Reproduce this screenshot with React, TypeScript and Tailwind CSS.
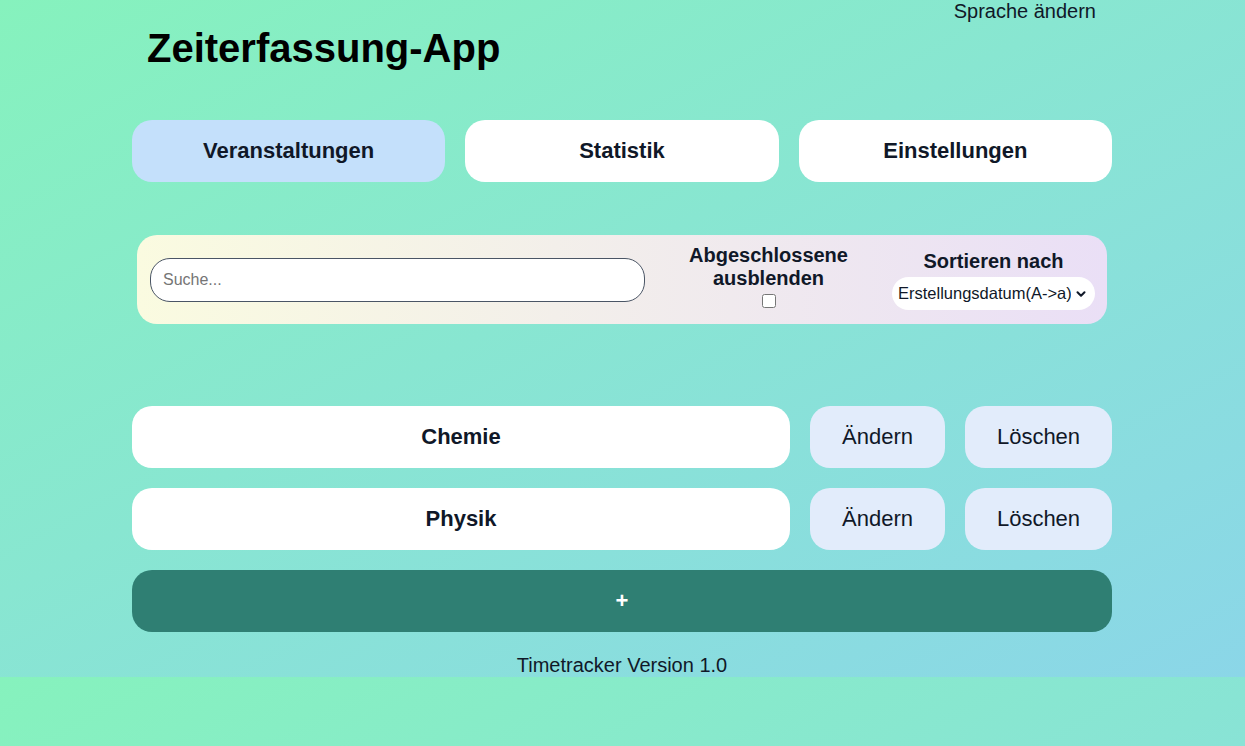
import { useState } from 'react';
import { ChevronDown } from 'lucide-react';

const events = ['Chemie', 'Physik'];

const tabs = ['Veranstaltungen', 'Statistik', 'Einstellungen'];

export default function App() {
  const [active, setActive] = useState('Veranstaltungen');
  const [hideDone, setHideDone] = useState(false);

  return (
    <div className="min-h-screen bg-linear-to-br from-[#86f2bd] to-[#8bd6e8] bg-size-[100%_677px] bg-repeat font-['Liberation_Sans',Arial,sans-serif] text-gray-900">
      <div className="bg-linear-to-br from-[#86f2bd] to-[#8bd6e8]">
        <div className="mx-auto flex w-[981px] flex-col pr-px">
          <div className="flex justify-end pr-4">
            <button className="text-[20px] leading-[23px] text-gray-900">Sprache ändern</button>
          </div>

          <h1 className="mt-[2px] pl-[15px] text-[40px] font-bold leading-[46px] text-black">
            Zeiterfassung-App
          </h1>

          <nav className="mt-[49px] grid grid-cols-3 gap-5">
            {tabs.map((t) => (
              <button
                key={t}
                onClick={() => setActive(t)}
                className={
                  'h-[62px] rounded-[20px] pb-px text-[22px] font-bold ' +
                  (active === t ? 'bg-[#c4e0fb]' : 'bg-white')
                }
              >
                {t}
              </button>
            ))}
          </nav>

          <section className="mx-[5px] mt-[53px] flex h-[89px] items-center justify-between rounded-[20px] bg-linear-to-r from-[#fafbe0] to-[#eadff6] pl-[13px] pr-[12px]">
            <input
              type="text"
              placeholder="Suche..."
              className="h-[44px] w-[495px] rounded-[20px] border border-gray-600 bg-white px-3 text-[16px] placeholder:text-[#757575]"
            />
            <label className="mt-[-7px] flex w-[170px] flex-col items-center text-center text-[20px] font-bold leading-[23px]">
              Abgeschlossene ausblenden
              <input
                type="checkbox"
                checked={hideDone}
                onChange={(e) => setHideDone(e.target.checked)}
                className="mt-[4px] h-[14px] w-[14px]"
              />
            </label>
            <div className="flex w-[203px] flex-col items-center">
              <span className="text-[20px] font-bold leading-[23px]">Sortieren nach</span>
              <div className="relative mt-[4px]">
                <select className="h-[33px] w-[203px] appearance-none rounded-full bg-white pl-[6px] pr-6 text-[16.5px] text-gray-900">
                  <option>Erstellungsdatum(A-&gt;a)</option>
                  <option>Erstellungsdatum(a-&gt;A)</option>
                  <option>Name(A-&gt;Z)</option>
                </select>
                <ChevronDown
                  size={14}
                  strokeWidth={3.5}
                  className="pointer-events-none absolute right-[7px] top-[10px] text-gray-900"
                />
              </div>
            </div>
          </section>

          <ul className="mt-[82px] flex flex-col gap-5">
            {events.map((name) => (
              <li key={name} className="flex h-[62px] gap-5">
                <button className="w-[658px] rounded-[20px] bg-white pb-px text-[22px] font-bold">{name}</button>
                <button className="w-[135px] rounded-[20px] bg-[#e2ecfb] pb-px text-[22px]">Ändern</button>
                <button className="flex-1 rounded-[20px] bg-[#e2ecfb] pb-px text-[22px]">Löschen</button>
              </li>
            ))}
            <li>
              <button className="h-[62px] w-full rounded-[20px] bg-[#2f7f73] pb-px text-[22px] font-bold text-white">+</button>
            </li>
          </ul>

          <footer className="mt-[22px] text-center text-[20px] leading-[23px]">Timetracker Version 1.0</footer>
        </div>
      </div>
    </div>
  );
}
